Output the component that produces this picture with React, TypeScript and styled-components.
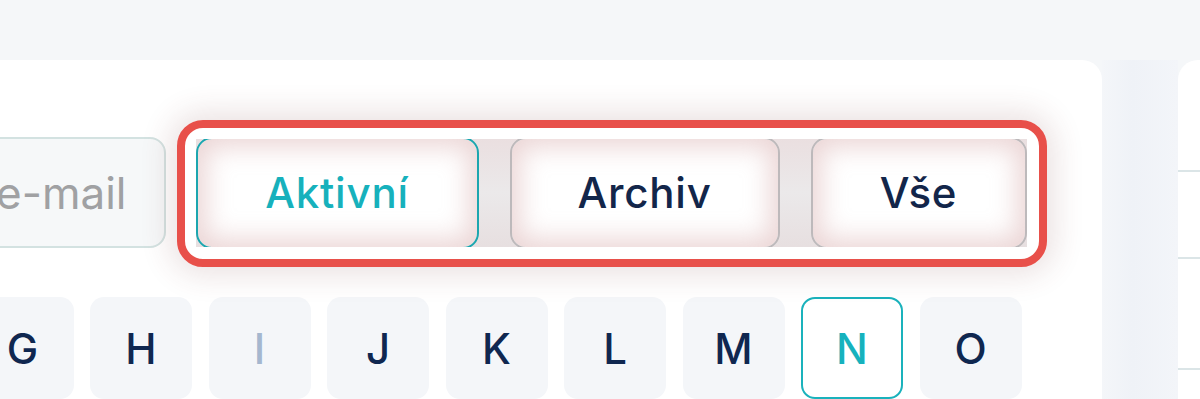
import * as React from 'react';
import styled, { createGlobalStyle } from 'styled-components';

const GlobalStyle = createGlobalStyle`
    html, body {
        margin: 0;
        padding: 0;
        background: #f5f7f9;
        overflow: hidden;
        font-family: Inter, "Noto Sans", "Liberation Sans", sans-serif;
    }
`;

const Page = styled.div`
    display: flex;
    height: 399px;
    padding-top: 60px;
    box-sizing: border-box;
`;

const MainCard = styled.section`
    flex: 0 0 auto;
    width: 1882px;
    margin-left: -780px;
    padding: 77px 75.5px 0 40.5px;
    box-sizing: border-box;
    background: #ffffff;
    border-top-right-radius: 20px;
`;

const Gutter = styled.div`
    flex: 0 0 76px;
    background: linear-gradient(90deg, #f4f6f9 0%, #eff2f7 40%, #f3f5f9 100%);
`;

const SideCard = styled.aside`
    flex: 1;
    background: #ffffff;
    border-top-left-radius: 20px;
    display: flex;
    flex-direction: column;
`;

const SideRow = styled.div<{ $h: number }>`
    height: ${(p) => p.$h}px;
    border-bottom: 2px solid #dbe5e7;
    flex: 0 0 auto;
`;

const Toolbar = styled.div`
    display: flex;
    align-items: center;
    gap: 30px;
`;

const SearchInput = styled.input`
    flex: 1;
    min-width: 0;
    height: 111px;
    box-sizing: border-box;
    padding: 0 37px 0 30px;
    border: 2px solid #d3e2e1;
    border-radius: 16px;
    background: #f6f8f9;
    font-family: inherit;
    font-size: 44px;
    text-align: right;
    color: #0f2a4f;
    outline: none;

    &::placeholder {
        color: #a0a1a3;
    }
`;

const TabsWrap = styled.div`
    position: relative;
    flex: 0 0 auto;

    &::before {
        content: '';
        position: absolute;
        inset: -19px -20px -20px -19px;
        border: 8px solid #e8504a;
        border-radius: 26px;
        box-shadow: 0 0 30px 8px rgba(110, 50, 50, 0.14);
        pointer-events: none;
    }
`;

const Tabs = styled.div`
    display: flex;
    gap: 31px;
    height: 108px;
    overflow: hidden;
    background: linear-gradient(180deg, #eadfe0 0%, #ebe9ea 50%, #e7dfe0 100%);
`;

const Tab = styled.button<{ $active?: boolean; $w: number }>`
    flex: 0 0 ${(p) => p.$w}px;
    height: 112px;
    margin: -2px 0;
    box-sizing: border-box;
    border: ${(p) => (p.$active ? '2px solid #1ca6af' : '2px solid #bdb9bb')};
    border-radius: 16px;
    background: #ffffff;
    box-shadow: inset 0 0 26px 8px rgba(205, 150, 150, 0.4);
    font-family: inherit;
    font-size: 42px;
    font-weight: 500;
    letter-spacing: 0.8px;
    color: ${(p) => (p.$active ? '#17b1bc' : '#13264a')};
    cursor: pointer;
`;

const Letters = styled.div`
    display: flex;
    flex-wrap: wrap;
    gap: 16.5px;
    margin-top: 49px;
`;

const Letter = styled.button<{ $active?: boolean; $disabled?: boolean }>`
    width: 102px;
    height: 102px;
    box-sizing: border-box;
    border: 2px solid ${(p) => (p.$active ? '#1ab2bc' : 'transparent')};
    border-radius: 14px;
    background: ${(p) => (p.$active ? '#ffffff' : '#f4f6f9')};
    font-family: inherit;
    font-size: 42px;
    font-weight: 500;
    color: ${(p) => (p.$active ? '#16b2bd' : p.$disabled ? '#a5b7cf' : '#0f2750')};
    cursor: pointer;
`;

const alphabet = 'ABCDEFGHIJKLMNOPQRSTUVWXYZ'.split('');

function App(): React.ReactElement {
    return (
        <>
            <GlobalStyle />
            <Page>
                <MainCard>
                    <Toolbar>
                        <SearchInput placeholder="Hledat podle jména nebo e-mail" />
                        <TabsWrap>
                            <Tabs>
                                <Tab $active $w={283}>Aktivní</Tab>
                                <Tab $w={270}>Archiv</Tab>
                                <Tab $w={216}>Vše</Tab>
                            </Tabs>
                        </TabsWrap>
                    </Toolbar>
                    <Letters>
                        {alphabet.map((l) => (
                            <Letter key={l} $active={l === 'N'} $disabled={l === 'I'}>
                                {l}
                            </Letter>
                        ))}
                    </Letters>
                </MainCard>
                <Gutter />
                <SideCard>
                    <SideRow $h={110} />
                    <SideRow $h={85} />
                    <SideRow $h={109} />
                </SideCard>
            </Page>
        </>
    );
}

export default App;
